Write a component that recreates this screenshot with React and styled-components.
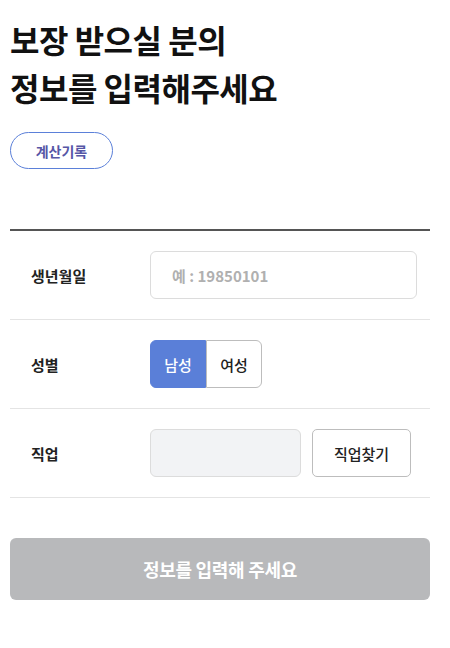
import React, { useState } from "react";
import styled, { createGlobalStyle } from "styled-components";

const Global = createGlobalStyle`
  html, body { margin: 0; padding: 0; background: #fff; }
  body { font-family: "Noto Sans CJK KR", "Noto Sans", sans-serif; color: #111; }
  * { box-sizing: border-box; }
`;

const Page = styled.div`
  padding: 15px 20px 40px 10px;
  display: flex;
  flex-direction: column;
`;

const Title = styled.h1`
  margin: 0;
  font-size: 32px;
  line-height: 48px;
  font-weight: 700;
  letter-spacing: -0.5px;
  color: #111;
`;

const HistoryButton = styled.button`
  margin-top: 21px;
  align-self: flex-start;
  width: 103px;
  height: 37px;
  border: 1px solid #5b80d9;
  border-radius: 19px;
  background: #fff;
  color: #5656a6;
  font-family: inherit;
  font-size: 14px;
  font-weight: 700;
  padding: 0;
`;

const Form = styled.div`
  margin-top: 60px;
  border-top: 2px solid #555;
`;

const Row = styled.div`
  display: flex;
  align-items: center;
  height: 89px;
  padding-left: 21px;
  border-bottom: 1px solid #e4e4e4;
`;

const Label = styled.div`
  width: 119px;
  font-size: 15px;
  font-weight: 700;
  color: #222;
`;

const TextInput = styled.input`
  width: ${(p) => p.$w}px;
  height: 48px;
  border: 1px solid #dcdcdc;
  border-radius: 6px;
  background: ${(p) => (p.disabled ? "#f2f3f5" : "#fff")};
  padding: 0 21px;
  font-family: inherit;
  font-size: 15px;
  font-weight: 700;
  color: #222;
  outline: none;
  &::placeholder { color: #b0b0b0; }
`;

const Segment = styled.div`
  display: flex;
  height: 48px;
`;

const SegButton = styled.button`
  width: 56px;
  height: 48px;
  padding: 0;
  font-family: inherit;
  font-size: 15px;
  font-weight: 500;
  color: ${(p) => (p.$active ? "#fff" : "#222")};
  background: ${(p) => (p.$active ? "#5a7fd8" : "#fff")};
  border: 1px solid ${(p) => (p.$active ? "#5a7fd8" : "#bdbdbd")};
  border-radius: ${(p) => (p.$first ? "6px 0 0 6px" : "0 6px 6px 0")};
`;

const JobGroup = styled.div`
  display: flex;
  gap: 11px;
`;

const FindButton = styled.button`
  width: 99px;
  height: 48px;
  padding: 0;
  border: 1px solid #bdbdbd;
  border-radius: 5px;
  background: #fff;
  font-family: inherit;
  font-size: 15px;
  font-weight: 500;
  color: #222;
`;

const Submit = styled.button`
  margin-top: 40px;
  width: 100%;
  height: 62px;
  border: none;
  border-radius: 6px;
  background: #b8b9bb;
  color: #fff;
  font-family: inherit;
  font-size: 18px;
  font-weight: 700;
  letter-spacing: -0.3px;
`;

export default function App() {
  const [gender, setGender] = useState("m");
  return (
    <>
      <Global />
      <Page>
        <Title>
          보장 받으실 분의
          <br />
          정보를 입력해주세요
        </Title>
        <HistoryButton>계산기록</HistoryButton>
        <Form>
          <Row>
            <Label>생년월일</Label>
            <TextInput $w={267} placeholder="예 : 19850101" />
          </Row>
          <Row>
            <Label>성별</Label>
            <Segment>
              <SegButton $first $active={gender === "m"} onClick={() => setGender("m")}>
                남성
              </SegButton>
              <SegButton $active={gender === "f"} onClick={() => setGender("f")}>
                여성
              </SegButton>
            </Segment>
          </Row>
          <Row>
            <Label>직업</Label>
            <JobGroup>
              <TextInput $w={151} disabled />
              <FindButton>직업찾기</FindButton>
            </JobGroup>
          </Row>
        </Form>
        <Submit>정보를 입력해 주세요</Submit>
      </Page>
    </>
  );
}
